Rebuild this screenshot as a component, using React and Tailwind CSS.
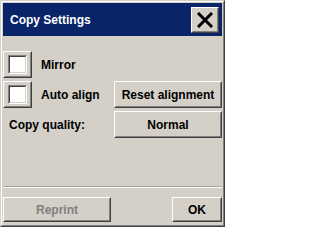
import React from "react";

const font = { fontFamily: '"Liberation Sans", Arial, sans-serif' };

function Raised({ className = "", children }) {
  return (
    <div className={`border border-t-white border-l-white border-r-[#404040] border-b-[#404040] ${className}`}>
      <div className="w-full h-full border border-t-[#d4d0c8] border-l-[#d4d0c8] border-r-[#808080] border-b-[#808080] flex items-center justify-center">
        {children}
      </div>
    </div>
  );
}

function Checkbox() {
  return (
    <Raised className="w-[29px] h-[27px] shrink-0">
      <div className="w-[19px] h-[19px] border border-t-[#808080] border-l-[#808080] border-r-white border-b-white">
        <div className="w-full h-full border border-t-[#404040] border-l-[#404040] border-r-[#d4d0c8] border-b-[#d4d0c8] bg-white" />
      </div>
    </Raised>
  );
}

export default function App() {
  return (
    <div style={font} className="w-[225px] h-[227px] bg-[#d4d0c8] border border-t-[#d4d0c8] border-l-[#d4d0c8] border-r-[#404040] border-b-[#404040]">
      <div className="w-full h-full border border-t-white border-l-white border-r-[#808080] border-b-[#808080] pt-px pl-px pr-px pb-[3px] flex flex-col">
        <div className="h-[33px] bg-[#0a246a] flex items-center justify-between pl-[7px] pr-[3px] shrink-0">
          <span className="text-white text-[12px] font-bold">Copy Settings</span>
          <Raised className="w-[28px] h-[26px] mt-px bg-[#d4d0c8]">
            <svg width="16" height="16" viewBox="0 0 16 16">
              <path d="M2 2 L14 14 M14 2 L2 14" stroke="#000" strokeWidth="3" strokeLinecap="square" />
            </svg>
          </Raised>
        </div>
        <div className="mt-[15px] flex flex-col gap-[3px] text-[12px] font-bold text-black">
          <div className="flex items-center h-[27px]">
            <Checkbox />
            <span className="ml-[9px]">Mirror</span>
          </div>
          <div className="flex items-center h-[27px]">
            <Checkbox />
            <span className="ml-[9px]">Auto align</span>
            <Raised className="ml-auto w-[108px] h-[27px]">Reset alignment</Raised>
          </div>
          <div className="flex items-center h-[27px]">
            <span className="ml-[6px]">Copy quality:</span>
            <Raised className="ml-auto w-[108px] h-[27px]">Normal</Raised>
          </div>
        </div>
        <div className="flex-1" />
        <div className="h-[2px] border-t border-t-[#a8a4a0] border-b border-b-white" />
        <div className="mt-[9px] flex items-center justify-between text-[12px] font-bold">
          <Raised className="w-[108px] h-[25px] text-[#808080]">Reprint</Raised>
          <Raised className="w-[50px] h-[25px] text-black">OK</Raised>
        </div>
      </div>
    </div>
  );
}
